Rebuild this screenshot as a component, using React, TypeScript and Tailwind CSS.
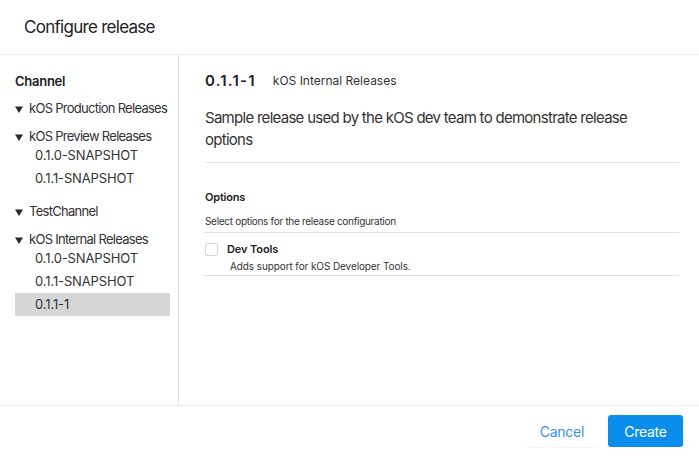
const tree = [
  { id: "prod", name: "kOS Production Releases", releases: [] as string[] },
  { id: "preview", name: "kOS Preview Releases", releases: ["0.1.0-SNAPSHOT", "0.1.1-SNAPSHOT"] },
  { id: "test", name: "TestChannel", releases: [] as string[] },
  { id: "internal", name: "kOS Internal Releases", releases: ["0.1.0-SNAPSHOT", "0.1.1-SNAPSHOT", "0.1.1-1"] },
];

function Caret() {
  return (
    <svg width="8" height="7" viewBox="0 0 8 7" className="shrink-0">
      <path d="M0 0.5 L8 0.5 L4 7 Z" fill="#2a2a2a" />
    </svg>
  );
}

export default function App() {
  return (
    <div
      className="flex h-[456px] w-[699px] flex-col bg-white tracking-[-0.045em] text-[#2b2b2b]"
      style={{ fontFamily: "Inter, 'Noto Sans', sans-serif" }}
    >
      {/* Header */}
      <div className="flex h-[55px] shrink-0 items-center border-b border-[#ebebeb] pl-6">
        <h1 className="text-[17px] leading-none text-[#222]">Configure release</h1>
      </div>

      {/* Body */}
      <div className="flex min-h-0 flex-1">
        <aside className="w-[179px] shrink-0 border-r border-[#e3e3e3] pl-[15px] pr-2 pt-[18px]">
          <h2 className="text-[13px] font-semibold leading-4 tracking-[-0.02em] text-[#222]">Channel</h2>
          <div className="mt-3 flex flex-col gap-3">
            {tree.map((group) => (
              <div key={group.id}>
                <div className="flex h-4 items-center gap-[6px] whitespace-nowrap text-[13px] text-[#333]">
                  <Caret />
                  <span>{group.name}</span>
                </div>
                {group.releases.length > 0 && (
                  <ul className="-mt-[1px] mb-[2px]">
                    {group.releases.map((r) => {
                      const selected = group.id === "internal" && r === "0.1.1-1";
                      return (
                        <li
                          key={r}
                          className={
                            selected
                              ? "flex h-[23px] items-center bg-[#d6d6d6] pl-5 text-[13px] tracking-[-0.01em] text-[#333]"
                              : "flex h-[23px] items-center pl-5 text-[13px] tracking-[-0.01em] text-[#333]"
                          }
                        >
                          {r}
                        </li>
                      );
                    })}
                  </ul>
                )}
              </div>
            ))}
          </div>
        </aside>

        <main className="flex-1 pl-[26px] pr-5 pt-[17px]">
          <div className="flex h-[18px] items-center gap-[17px]">
            <span className="text-[15px] font-semibold tracking-[1.2px] text-[#222]">0.1.1-1</span>
            <span className="text-[12px] tracking-normal text-[#333]">kOS Internal Releases</span>
          </div>

          <div className="mt-[17px] border-b border-[#e3e3e3] pb-[11px]">
            <p className="max-w-[440px] text-[15px] leading-[22px] text-[#333]">
              Sample release used by the kOS dev team to demonstrate release options
            </p>
          </div>

          <h3 className="mt-[27px] text-[11px] font-semibold leading-[14px] tracking-[-0.02em] text-[#222]">Options</h3>
          <p className="mt-[11px] border-b border-[#e0e0e0] pb-[4px] text-[10px] leading-[13px] tracking-[-0.03em] text-[#333]">
            Select options for the release configuration
          </p>

          <div className="border-b border-[#e0e0e0] pb-[2px] pt-[9px]">
            <label className="flex items-center gap-[9px]">
              <span className="h-[13px] w-[13px] rounded-[2px] border border-[#d4d4d4] bg-white" />
              <span className="text-[11px] font-semibold leading-[14px] tracking-[-0.01em] text-[#222]">Dev Tools</span>
            </label>
            <p className="mt-[4px] pl-[25px] text-[10px] leading-[13px] tracking-[-0.01em] text-[#333]">
              Adds support for kOS Developer Tools.
            </p>
          </div>
        </main>
      </div>

      {/* Footer */}
      <div className="flex h-[51px] shrink-0 items-center justify-end gap-[10px] border-t border-[#ececec] pr-4">
        <button className="h-8 rounded-[3px] px-[14px] text-[14px] tracking-[-0.02em] text-[#3a8fe3] shadow-[0_1px_1px_rgba(0,0,0,0.04)]">
          Cancel
        </button>
        <button className="h-8 w-[75px] rounded-[3px] bg-[#0b8deb] text-[14px] tracking-[-0.02em] text-white">Create</button>
      </div>
    </div>
  );
}
